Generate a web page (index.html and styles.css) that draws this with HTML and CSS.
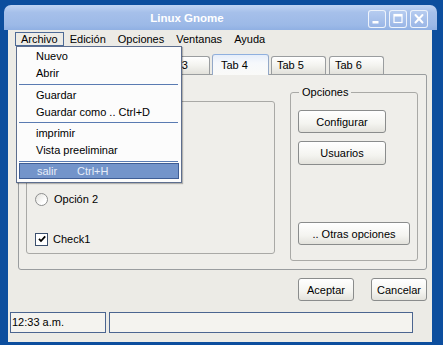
FILE: index.html
```html
<!DOCTYPE html>
<html lang="es">
<head>
<meta charset="utf-8">
<title>Linux Gnome</title>
<link rel="stylesheet" href="styles.css">
</head>
<body>
<div class="window">
  <div class="titlebar">
    <div class="title">Linux Gnome</div>
    <div class="tbtns">
      <div class="tbtn"><svg width="16" height="16" viewBox="0 0 16 16"><rect x="3.5" y="10" width="6" height="2.5" fill="#fff"/></svg></div>
      <div class="tbtn"><svg width="16" height="16" viewBox="0 0 16 16"><rect x="4" y="3.5" width="8" height="8" fill="none" stroke="#fff" stroke-width="1.2"/><rect x="4" y="3.5" width="8" height="2" fill="#fff"/></svg></div>
      <div class="tbtn"><svg width="16" height="16" viewBox="0 0 16 16"><path d="M4.5 4 L11.5 11.5 M11.5 4 L4.5 11.5" stroke="#fff" stroke-width="2" stroke-linecap="round"/></svg></div>
    </div>
  </div>
  <div class="client">
    <div class="menubar">
      <span class="mitem open">Archivo</span>
      <span class="mitem">Edición</span>
      <span class="mitem">Opciones</span>
      <span class="mitem">Ventanas</span>
      <span class="mitem">Ayuda</span>
    </div>

    <div class="tabs">
      <div class="tab"></div>
      <div class="tab"></div>
      <div class="tab">Tab 3</div>
      <div class="tab sel">Tab 4</div>
      <div class="tab">Tab 5</div>
      <div class="tab">Tab 6</div>
    </div>
    <div class="panel">
      <div class="innerbox">
        <label class="row r2"><span class="radio"></span>Opción 2</label>
        <label class="row r3"><span class="check"><svg width="10" height="10" viewBox="0 0 10 10"><path d="M2 4.8 L4 7 L8.2 2.4" fill="none" stroke="#000" stroke-width="1.8"/></svg></span>Check1</label>
      </div>
      <fieldset class="group">
        <legend>Opciones</legend>
        <button class="btn b1">Configurar</button>
        <button class="btn b2">Usuarios</button>
        <button class="btn b3">.. Otras opciones</button>
      </fieldset>
    </div>

    <div class="actions">
      <button class="btn act">Aceptar</button>
      <button class="btn act">Cancelar</button>
    </div>

    <div class="status">
      <div class="spanel s1">12:33 a.m.</div>
      <div class="spanel s2"></div>
    </div>

    <div class="dropdown">
      <div class="ditem">Nuevo</div>
      <div class="ditem">Abrir</div>
      <div class="sep sep1"></div>
      <div class="ditem">Guardar</div>
      <div class="ditem">Guardar como .. Ctrl+D</div>
      <div class="sep sep2"></div>
      <div class="ditem">imprimir</div>
      <div class="ditem">Vista preeliminar</div>
      <div class="sep sep3"></div>
      <div class="ditem hl"><span class="lbl">salir</span><span>Ctrl+H</span></div>
    </div>
  </div>
</div>
</body>
</html>
```
FILE: styles.css
```css
* { box-sizing: border-box; }
html, body {
  margin: 0;
  padding: 0;
}
body {
  width: 443px;
  height: 345px;
  overflow: hidden;
  background: #0c4e9e;
  font-family: "Liberation Sans", Arial, sans-serif;
  font-size: 11px;
  color: #000;
}
.window {
  margin: 5px 0 0 4px;
  width: 433px;
}
.titlebar {
  height: 25px;
  border-radius: 7px 7px 0 0;
  background: linear-gradient(#bfd3f3, #a6c0ea 30%, #9cb9e7 80%, #90b0e3);
  display: flex;
  align-items: center;
  padding-right: 9px;
}
.title {
  flex: 1;
  text-align: center;
  color: #fff;
  font-weight: bold;
  font-size: 11.5px;
  padding-left: 2px;
}
.tbtns {
  display: flex;
  gap: 3px;
  margin-top: 2px;
}
.tbtn {
  width: 18px;
  height: 18px;
  border: 1px solid rgba(255,255,255,0.8);
  border-radius: 3px;
  background: linear-gradient(#b6ccf0, #9ab6e6);
  display: flex;
  align-items: center;
  justify-content: center;
}
.client {
  position: relative;
  margin-left: 4px;
  width: 424px;
  height: 312px;
  background: #ecebe6;
  padding-top: 2px;
}
.menubar {
  display: flex;
  height: 14px;
  padding-left: 7px;
}
.mitem {
  height: 14px;
  line-height: 12px;
  padding: 0 5px;
  border: 1px solid transparent;
}
.mitem.open {
  border-color: #4d6a96;
}
.tabs {
  display: flex;
  gap: 3px;
  margin: 8px 0 0 31px;
  height: 20px;
  position: relative;
  z-index: 1;
}
.tab {
  width: 55px;
  height: 18px;
  margin-top: 2px;
  padding-left: 5px;
  line-height: 17px;
  border: 1px solid #9a9d9f;
  border-bottom: none;
  border-radius: 3px 3px 0 0;
  background: linear-gradient(#ffffff, #f3f3ef 50%, #e2e1db);
}
.tab.sel {
  width: 57px;
  height: 21px;
  margin: 0 -1px 0 -1px;
  padding-left: 8px;
  line-height: 21px;
  border-color: #93a8c8;
  border-top-color: #8fb0df;
  background: linear-gradient(#e6eefa, #f6f8fc 40%, #fafaf8);
}
.panel {
  margin: 0 5px 0 10px;
  height: 196px;
  border: 1px solid #9a9d9f;
  border-radius: 0 2px 3px 3px;
  background: #efeeea;
  display: flex;
  align-items: flex-start;
}
.innerbox {
  margin: 26px 0 0 7px;
  width: 249px;
  height: 153px;
  border: 1px solid #a9a9a6;
  border-radius: 3px;
  padding-left: 8px;
  display: flex;
  flex-direction: column;
}
.row {
  display: flex;
  align-items: center;
  height: 14px;
}
.r2 { margin-top: 90px; }
.r3 { margin-top: 26px; }
.radio {
  width: 13px;
  height: 13px;
  border: 1px solid #8e8f8f;
  border-radius: 50%;
  background: linear-gradient(135deg, #e2e1dc, #ffffff 70%);
  margin-right: 6px;
}
.check {
  width: 13px;
  height: 13px;
  border: 1px solid #3b4f6d;
  background: #fff;
  margin-right: 5px;
  display: flex;
  align-items: center;
  justify-content: center;
}
.group {
  margin: 11px 0 0 15px;
  width: 128px;
  height: 175px;
  border: 1px solid #a9a9a6;
  border-radius: 3px;
  padding: 0 0 0 7px;
  display: flex;
  flex-direction: column;
  align-items: flex-start;
}
.group legend {
  padding: 0 3px;
  margin-left: 1px;
  line-height: 13px;
}
.btn {
  font-family: "Liberation Sans", Arial, sans-serif;
  font-size: 11px;
  color: #000;
  height: 23px;
  border: 1px solid #8a8c8c;
  border-radius: 3px;
  background: linear-gradient(#ffffff, #f4f4f0 60%, #e3e2dc);
  padding: 0;
}
.b1 { width: 88px; margin-top: 11px; }
.b2 { width: 88px; margin-top: 8px; height: 24px; }
.b3 { width: 112px; margin-top: 57px; }
.actions {
  display: flex;
  justify-content: flex-end;
  gap: 17px;
  margin: 8px 5px 0 0;
}
.act { width: 56px; }
.status {
  display: flex;
  gap: 3px;
  margin: 11px 0 0 2px;
}
.spanel {
  height: 21px;
  border: 1px solid #4b6590;
  background: #f4f3ef;
  line-height: 19px;
  padding-left: 1px;
}
.s1 { width: 96px; }
.s2 { width: 304px; }
.dropdown {
  position: absolute;
  left: 8px;
  top: 16px;
  width: 166px;
  height: 137px;
  background: #fcfcfc;
  border: 1px solid #5d6e8e;
  box-shadow: 1px 1px 1px rgba(0,0,0,0.25);
  padding-top: 1px;
  z-index: 5;
}
.ditem {
  height: 17px;
  line-height: 17px;
  padding-left: 19px;
}
.sep {
  margin: 0 3px 0 2px;
  position: relative;
}
.sep::after {
  content: "";
  position: absolute;
  left: 0;
  right: 0;
  height: 1px;
  background: #5a7bb2;
}
.sep1 { height: 5px; }
.sep1::after { top: 2px; }
.sep2 { height: 4px; }
.sep2::after { top: 1px; }
.sep3 { height: 4px; }
.sep3::after { top: 2px; }
.ditem.hl {
  margin: 0 2px;
  padding-left: 17px;
  height: 16px;
  line-height: 14px;
  background: #7394ca;
  border: 1px solid #3e5d95;
  color: #e6edf8;
  display: flex;
}
.ditem.hl .lbl {
  width: 40px;
}
```
